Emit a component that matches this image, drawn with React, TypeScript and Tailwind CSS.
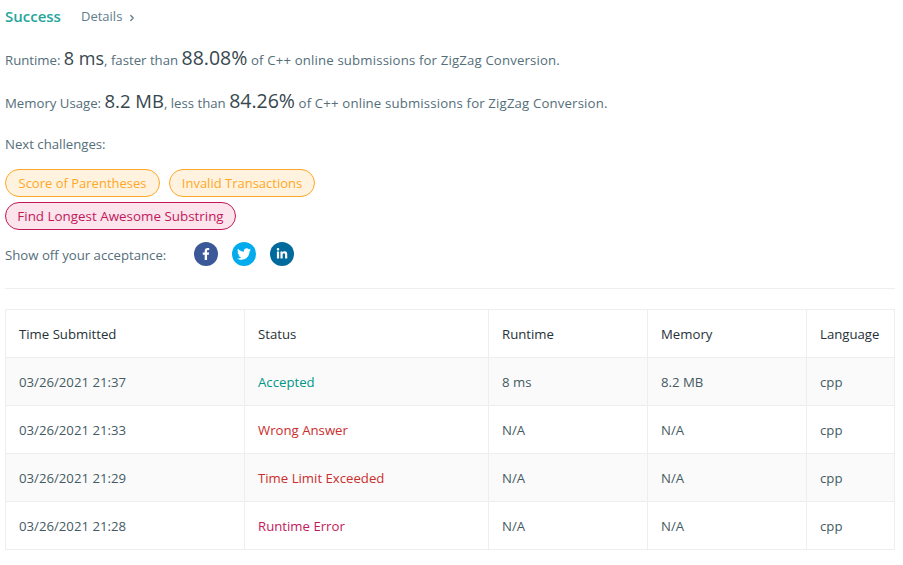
import React from 'react';
import { FaFacebookF, FaTwitter, FaLinkedinIn } from 'react-icons/fa';
import { ChevronRight } from 'lucide-react';

const rows = [
  { time: '03/26/2021 21:37', status: 'Accepted', color: 'text-[#009688]', runtime: '8 ms', memory: '8.2 MB', bg: 'bg-[#fafafa]' },
  { time: '03/26/2021 21:33', status: 'Wrong Answer', color: 'text-[#cb2d2d]', runtime: 'N/A', memory: 'N/A', bg: 'bg-white' },
  { time: '03/26/2021 21:29', status: 'Time Limit Exceeded', color: 'text-[#cb2d2d]', runtime: 'N/A', memory: 'N/A', bg: 'bg-[#fafafa]' },
  { time: '03/26/2021 21:28', status: 'Runtime Error', color: 'text-[#c2185b]', runtime: 'N/A', memory: 'N/A', bg: 'bg-white' },
];

const cell = 'border border-[#eeeeee] pl-[13px] pt-[2px] h-[48px] font-normal text-left';

export default function App() {
  return (
    <div className="w-[903px] h-[565px] bg-white overflow-hidden pl-[5px] pr-[8px] font-['Open_Sans','Noto_Sans',sans-serif] text-[13.2px] text-[#546e7a]">
      <div className="flex items-center h-[32px]">
        <span className="text-[15px] font-semibold text-[#26a69a] w-[76px]">Success</span>
        <span className="text-[13px] text-[#607d8b] pt-[1px]">Details</span>
        <ChevronRight size={10} strokeWidth={3} className="ml-[5px] mt-[3px] text-[#607d8b]" />
      </div>

      <div className="flex items-baseline h-[24px] mt-[11px] whitespace-pre">
        <span>Runtime: </span>
        <span className="text-[18px] text-[#37474f]">8 ms</span>
        <span>, faster than </span>
        <span className="text-[19.5px] text-[#37474f]">88.08%</span>
        <span className="tracking-[0.16px]"> of C++ online submissions for ZigZag Conversion.</span>
      </div>
      <div className="flex items-baseline h-[24px] mt-[19px] whitespace-pre">
        <span>Memory Usage: </span>
        <span className="text-[18.5px] text-[#37474f]">8.2 MB</span>
        <span>, less than </span>
        <span className="text-[19.5px] text-[#37474f]">84.26%</span>
        <span className="tracking-[0.16px]"> of C++ online submissions for ZigZag Conversion.</span>
      </div>

      <div className="mt-[25px] h-[18px] leading-[18px]">Next challenges:</div>

      <div className="flex gap-[9px] mt-[16px]">
        <span className="h-[28px] w-[155px] pt-[1px] text-[13px] flex items-center justify-center rounded-full border border-[#ffa726] bg-[#fff3e0] text-[#ffa726]">Score of Parentheses</span>
        <span className="h-[28px] w-[146px] pt-[1px] text-[13px] flex items-center justify-center rounded-full border border-[#ffa726] bg-[#fff3e0] text-[#ffa726]">Invalid Transactions</span>
      </div>
      <div className="flex mt-[5px]">
        <span className="h-[28px] w-[231px] pt-[1px] text-[13.4px] flex items-center justify-center rounded-full border border-[#c2185b] bg-[#fce4ec] text-[#c2185b]">Find Longest Awesome Substring</span>
      </div>

      <div className="flex items-center h-[24px] mt-[12px]">
        <span className="w-[189px] pt-[4px]">Show off your acceptance:</span>
        <span className="w-[24px] h-[24px] rounded-full bg-[#3b5998] flex items-center justify-center text-white"><FaFacebookF size={12} /></span>
        <span className="w-[24px] h-[24px] rounded-full bg-[#00aced] flex items-center justify-center text-white ml-[14px]"><FaTwitter size={14} /></span>
        <span className="w-[24px] h-[24px] rounded-full bg-[#006a9c] flex items-center justify-center text-white ml-[14px]"><FaLinkedinIn size={12} /></span>
      </div>

      <div className="border-t border-[#eeeeee] mt-[22px] w-[890px]" />

      <table className="mt-[20px] w-[889px] table-fixed border-collapse">
        <colgroup>
          <col className="w-[239px]" />
          <col className="w-[244px]" />
          <col className="w-[159px]" />
          <col className="w-[159px]" />
          <col className="w-[88px]" />
        </colgroup>
        <thead>
          <tr className="text-[#263238]">
            <th className={cell}>Time Submitted</th>
            <th className={cell}>Status</th>
            <th className={cell}>Runtime</th>
            <th className={cell}>Memory</th>
            <th className={cell}>Language</th>
          </tr>
        </thead>
        <tbody className="text-[#455a64]">
          {rows.map((r) => (
            <tr key={r.time} className={r.bg}>
              <td className={cell}>{r.time}</td>
              <td className={`${cell} ${r.color}`}>{r.status}</td>
              <td className={cell}>{r.runtime}</td>
              <td className={cell}>{r.memory}</td>
              <td className={cell}>cpp</td>
            </tr>
          ))}
        </tbody>
      </table>
    </div>
  );
}
